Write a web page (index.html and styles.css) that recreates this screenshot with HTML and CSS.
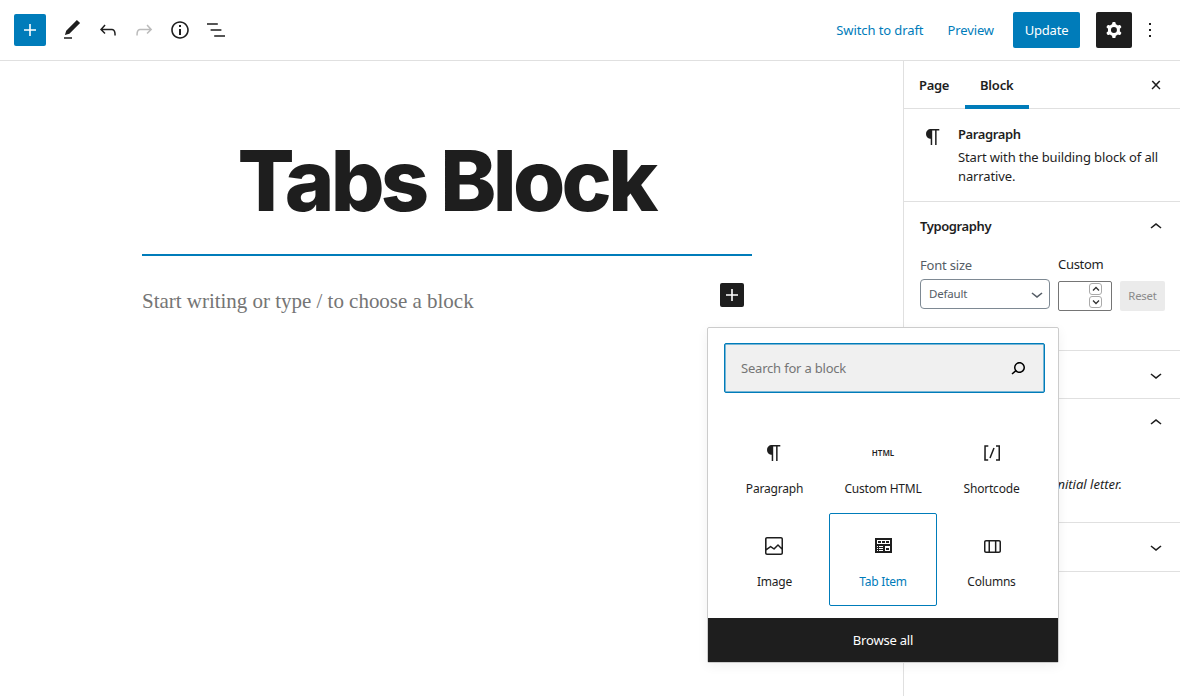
FILE: index.html
```html
<!DOCTYPE html>
<html lang="en">
<head>
<meta charset="utf-8">
<title>Edit Page</title>
<link rel="stylesheet" href="styles.css">
</head>
<body>
<div class="app">
  <header class="topbar">
    <button class="inserter"><svg class="icon" viewBox="0 0 24 24"><path d="M18 11.2h-5.2V6h-1.6v5.2H6v1.6h5.2V18h1.6v-5.2H18z"/></svg></button>
    <div class="tools">
      <button class="tool"><svg class="icon" viewBox="0 0 24 24"><path d="M20.1 5.1L16.9 2 6.2 12.7l-1.3 4.4 4.5-1.3L20.1 5.1zM4 20.8h8v-1.5H4v1.5z"/></svg></button>
      <button class="tool"><svg class="icon" viewBox="0 0 24 24"><path d="M18.3 11.7c-.6-.6-1.4-.9-2.3-.9H6.7l2.9-3.3-1.1-1-4.5 5L8.5 16l1-1-2.7-2.7H16c.5 0 .9.2 1.3.5 1 1 1 3.4 1 4.5v.3h1.5v-.2c0-1.5 0-4.3-1.5-5.7z"/></svg></button>
      <button class="tool tool-off"><svg class="icon" viewBox="0 0 24 24"><path d="M15.6 6.5l-1.1 1 2.9 3.3H8c-.9 0-1.7.3-2.3.9-1.4 1.5-1.4 4.2-1.4 5.6v.2h1.5v-.3c0-1.1 0-3.5 1-4.5.3-.3.7-.5 1.3-.5h9.2L14.5 15l1.1 1.1 4.6-4.6-4.6-5z"/></svg></button>
      <button class="tool"><svg class="icon" viewBox="0 0 24 24"><path d="M12 3.2c-4.8 0-8.8 3.9-8.8 8.8 0 4.8 3.9 8.8 8.8 8.8 4.8 0 8.8-3.9 8.8-8.8 0-4.8-4-8.8-8.8-8.8zm0 16c-4 0-7.2-3.3-7.2-7.2C4.8 8 8 4.8 12 4.8s7.2 3.3 7.2 7.2c0 4-3.2 7.2-7.2 7.2zM11 17h2v-6h-2v6zm0-8h2V7h-2v2z"/></svg></button>
      <button class="tool"><svg class="icon" viewBox="0 0 24 24"><path d="M13.8 5.2H3v1.5h10.8V5.2zm-3.6 12v1.5H21v-1.5H10.2zm7.2-6H6.6v1.5h10.8v-1.5z"/></svg></button>
    </div>
    <div class="actions">
      <a class="link draft">Switch to draft</a>
      <a class="link preview">Preview</a>
      <button class="update">Update</button>
      <button class="settings"><svg class="icon" viewBox="0 0 24 24"><path fill-rule="evenodd" d="M10.289 4.836A1 1 0 0111.275 4h1.306a1 1 0 01.987.836l.244 1.466c.787.26 1.503.679 2.108 1.218l1.393-.522a1 1 0 011.216.437l.653 1.13a1 1 0 01-.23 1.273l-1.148.944a6.025 6.025 0 010 2.435l1.149.946a1 1 0 01.23 1.272l-.653 1.13a1 1 0 01-1.216.437l-1.394-.522c-.605.54-1.32.958-2.108 1.218l-.244 1.466a1 1 0 01-.987.836h-1.306a1 1 0 01-.986-.836l-.244-1.466a5.995 5.995 0 01-2.108-1.218l-1.394.522a1 1 0 01-1.217-.436l-.653-1.131a1 1 0 01.23-1.272l1.149-.946a6.026 6.026 0 010-2.435l-1.148-.944a1 1 0 01-.23-1.272l.653-1.131a1 1 0 011.217-.437l1.393.522a5.994 5.994 0 012.108-1.218l.244-1.466zM14.929 12a3 3 0 11-6 0 3 3 0 016 0z"/></svg></button>
      <button class="tool"><svg class="icon" viewBox="0 0 24 24"><path d="M13 19h-2v-2h2v2zm0-6h-2v-2h2v2zm0-6h-2V5h2v2z"/></svg></button>
    </div>
  </header>

  <div class="body">
    <main class="canvas">
      <h1 class="title">Tabs Block</h1>
      <div class="insertion"></div>
      <div class="prompt">
        <p class="placeholder">Start writing or type / to choose a block</p>
        <button class="add"><svg class="icon" viewBox="0 0 24 24"><path d="M18 11.2h-5.2V6h-1.6v5.2H6v1.6h5.2V18h1.6v-5.2H18z"/></svg></button>
      </div>
    </main>

    <aside class="sidebar">
      <div class="tabs">
        <span class="tab">Page</span>
        <span class="tab tab-active">Block</span>
        <svg class="icon close" viewBox="0 0 24 24"><path d="M13 11.9l3.3-3.4-1.1-1-3.2 3.3-3.2-3.3-1.1 1 3.3 3.4-3.5 3.6 1 1L12 13l3.5 3.5 1-1z"/></svg>
      </div>
      <section class="card">
        <svg class="icon card-icon" viewBox="0 0 24 24"><path d="M18.3 4H9.9v-.1l-.9.2c-2.3.4-4 2.4-4 4.8s1.7 4.4 4 4.8l.7.1V20h1.5V5.5h2.9V20h1.5V5.5h2.7V4z"/></svg>
        <div>
          <h2 class="card-title">Paragraph</h2>
          <p class="card-text">Start with the building block of all<br>narrative.</p>
        </div>
      </section>
      <section class="panel typography">
        <div class="panel-head"><h2 class="panel-title">Typography</h2><svg class="icon" viewBox="0 0 24 24"><path d="M6.5 12.4L12 8l5.5 4.4-.9 1.2L12 10l-4.5 3.6-1-1.2z"/></svg></div>
        <div class="fields">
          <div class="field">
            <span class="label label-size">Font size</span>
            <div class="select"><span>Default</span><svg class="icon" viewBox="0 0 24 24"><path d="M17.5 11.6L12 16l-5.5-4.4.9-1.2L12 14l4.5-3.6 1 1.2z"/></svg></div>
          </div>
          <div class="field">
            <span class="label label-custom">Custom</span>
            <div class="custom">
              <div class="number">
                <span class="step"><svg class="caret" viewBox="0 0 8 6"><path d="M1 4.5l3-3 3 3"/></svg></span>
                <span class="step"><svg class="caret" viewBox="0 0 8 6"><path d="M1 1.5l3 3 3-3"/></svg></span>
              </div>
              <button class="reset">Reset</button>
            </div>
          </div>
        </div>
      </section>
      <section class="panel color"><svg class="icon" viewBox="0 0 24 24"><path d="M17.5 11.6L12 16l-5.5-4.4.9-1.2L12 14l4.5-3.6 1 1.2z"/></svg></section>
      <section class="panel text-settings"><svg class="icon" viewBox="0 0 24 24"><path d="M6.5 12.4L12 8l5.5 4.4-.9 1.2L12 10l-4.5 3.6-1-1.2z"/></svg><p class="hint">initial letter.</p></section>
      <section class="panel advanced"><svg class="icon" viewBox="0 0 24 24"><path d="M17.5 11.6L12 16l-5.5-4.4.9-1.2L12 14l4.5-3.6 1 1.2z"/></svg></section>
    </aside>
  </div>

  <div class="popover">
    <div class="search"><span class="search-text">Search for a block</span><svg class="icon" viewBox="0 0 24 24"><path d="M13.5 6C10.5 6 8 8.5 8 11.5c0 1.1.3 2.1.9 3l-3.4 3 1 1.1 3.4-2.9c1 .9 2.2 1.4 3.6 1.4 3 0 5.5-2.5 5.5-5.5C19 8.5 16.5 6 13.5 6zm0 9.5c-2.2 0-4-1.8-4-4s1.8-4 4-4 4 1.8 4 4-1.8 4-4 4z"/></svg></div>
    <div class="blocks">
      <div class="block"><svg class="icon" viewBox="0 0 24 24"><path d="M18.3 4H9.9v-.1l-.9.2c-2.3.4-4 2.4-4 4.8s1.7 4.4 4 4.8l.7.1V20h1.5V5.5h2.9V20h1.5V5.5h2.7V4z"/></svg><span>Paragraph</span></div>
      <div class="block"><b class="html-icon">HTML</b><span>Custom HTML</span></div>
      <div class="block"><svg class="icon" viewBox="0 0 24 24"><path d="M16 4.2v1.5h2.5v12.5H16v1.5h4V4.2h-4zM4.2 19.8h4v-1.5H5.8V5.8h2.5V4.2h-4l-.1 15.6zm5.1-3.1l1.4.6 4-10-1.4-.6-4 10z"/></svg><span>Shortcode</span></div>
      <div class="block"><svg class="icon" viewBox="0 0 24 24"><path d="M19 3H5c-1.1 0-2 .9-2 2v14c0 1.1.9 2 2 2h14c1.1 0 2-.9 2-2V5c0-1.1-.9-2-2-2zM5 4.5h14c.3 0 .5.2.5.5v8.4l-3-2.9c-.3-.3-.8-.3-1 0L11.9 14 9 12c-.3-.2-.6-.2-.8 0l-3.6 2.6V5c-.1-.3.1-.5.4-.5zm14 15H5c-.3 0-.5-.2-.5-.5v-2.4l4.1-3 3 1.9c.3.2.7.2.9-.1L16 12l3.5 3.4V19c0 .3-.2.5-.5.5z"/></svg><span>Image</span></div>
      <div class="block block-active"><svg class="icon" viewBox="0 0 24 24" shape-rendering="crispEdges"><path fill-rule="evenodd" d="M4 4h17v15H4zM6 6v4h13V6zM6 12v1h1v-1zM8 12v1h4v-1zM6 14v1h1v-1zM8 14v1h4v-1zM6 16v1h1v-1zM8 16v1h4v-1zM14 12v5h5v-5z"/><path d="M7 7h3v2H7zM11 7h3v2h-3zM15 7h3v2h-3zM15 14h3v2h-3z"/></svg><span>Tab Item</span></div>
      <div class="block"><svg class="icon" viewBox="0 0 24 24"><path d="M19 6H6c-1.100 0-2 .9-2 2v9c0 1.100.9 2 2 2h13c1.100 0 2-.9 2-2V8c0-1.100-.9-2-2-2zm-4.100 1.500v10H10v-10h4.900zM5.500 17V8c0-.3.2-.5.5-.5h2.500v10H6c-.3 0-.5-.2-.5-.5zm14 0c0 .3-.2.5-.5.5h-2.600v-10H19c.3 0 .5.2.5.5v9z"/></svg><span>Columns</span></div>
    </div>
    <button class="browse">Browse all</button>
  </div>
</div>
</body>
</html>
```
FILE: styles.css
```css
* { box-sizing: border-box; }
body {
  margin: 0;
  font: 13px/19px "Noto Sans", "Open Sans", sans-serif;
  letter-spacing: -0.2px;
  color: #1e1e1e;
  background: #fff;
}
button { border: 0; padding: 0; font: inherit; letter-spacing: inherit; color: inherit; background: none; display: flex; align-items: center; justify-content: center; }
h1, h2, p { margin: 0; }
.icon { width: 24px; height: 24px; fill: currentColor; flex: none; display: block; }
.app { position: relative; width: 1180px; height: 696px; overflow: hidden; display: flex; flex-direction: column; }

.topbar { height: 61px; border-bottom: 1px solid #e0e0e0; display: flex; align-items: center; padding: 0 12px 0 14px; flex: none; }
.inserter { width: 32px; height: 32px; background: #007cba; color: #fff; border-radius: 2px; }
.tools { display: flex; margin-left: 8px; }
.tool { width: 36px; height: 36px; }
.tool-off { color: #bbb; }
.actions { display: flex; align-items: center; margin-left: auto; }
.link { color: #007cba; letter-spacing: -0.1px; }
.draft { margin-right: 24px; }
.preview { margin-right: 19px; }
.update { width: 67px; height: 36px; margin-right: 16px; background: #007cba; color: #fff; border-radius: 2px; }
.settings { width: 36px; height: 36px; background: #1e1e1e; color: #fff; border-radius: 2px; }

.body { display: flex; flex: 1; }
.canvas { width: 903px; padding: 75px 151px 0 142px; }
.title { font: 800 84.5px/88px Inter, sans-serif; letter-spacing: -0.044em; text-align: center; white-space: nowrap; padding-right: 2px; }
.insertion { height: 2px; background: #007cba; margin-top: 30px; }
.prompt { display: flex; justify-content: space-between; align-items: flex-start; margin-top: 27px; padding-right: 8px; }
.placeholder { font: 21px/36px "Liberation Serif", serif; letter-spacing: -0.02px; color: #757575; }
.add { width: 24px; height: 24px; background: #1e1e1e; color: #fff; border-radius: 2px; }

.sidebar { width: 277px; border-left: 1px solid #e0e0e0; }
.tabs { height: 48px; border-bottom: 1px solid #e0e0e0; display: flex; padding-right: 12px; align-items: center; }
.tab { height: 48px; line-height: 48px; font-weight: 600; letter-spacing: -0.35px; padding: 0 15px; width: 61px; white-space: nowrap; }
.tab-active { width: 64px; letter-spacing: -0.2px; box-shadow: inset 0 -4px #007cba; }
.close { margin-left: auto; }
.card { display: flex; height: 93px; padding: 16px; border-bottom: 1px solid #e0e0e0; }
.card-icon { margin: 0 13px 0 1px; }
.card-title { font-size: 13px; line-height: 19px; font-weight: 600; letter-spacing: -0.4px; margin-bottom: 4px; }
.card-text { white-space: nowrap; letter-spacing: -0.13px; }
.panel { border-bottom: 1px solid #e0e0e0; padding: 0 12px 0 16px; }
.typography { height: 149px; }
.panel-head { display: flex; justify-content: space-between; align-items: center; height: 49px; }
.panel-title { font-size: 13px; font-weight: 600; letter-spacing: -0.4px; }
.fields { display: flex; gap: 8px; }
.field { display: flex; flex-direction: column; }
.label { height: 19px; }
.label-size { color: #555d66; margin: 5px 0 4px; }
.label-custom { margin: 4px 0 7px; letter-spacing: -0.3px; }
.select { width: 130px; height: 30px; border: 1px solid #7e8993; border-radius: 4px; display: flex; align-items: center; justify-content: space-between; padding-left: 8px; font-size: 11.5px; color: #555d66; }
.select span { margin-bottom: 1px; }
.custom { display: flex; gap: 8px; }
.number { width: 54px; height: 30px; border: 1px solid #757575; border-radius: 2px; display: flex; flex-direction: column; align-items: flex-end; gap: 1px; padding: 1px 9px 0 0; }
.step { width: 13px; height: 12px; border: 1px solid #aaa; border-radius: 3px; display: flex; align-items: center; justify-content: center; }
.caret { width: 8px; height: 6px; fill: none; stroke: #333; stroke-width: 1.3; }
.reset { width: 45px; height: 30px; background: #ebebeb; color: #8a8a8a; font-size: 11.3px; padding-bottom: 1px; border-radius: 2px; }
.color, .text-settings, .advanced { display: flex; flex-direction: column; align-items: flex-end; }
.color { height: 48px; padding-top: 12px; }
.text-settings { height: 124px; padding-top: 12px; }
.advanced { height: 49px; padding-top: 12px; }
.hint { font-style: italic; white-space: nowrap; letter-spacing: 0; margin: 40px 46px 0 0; }

.popover { position: absolute; left: 707px; top: 327px; width: 352px; height: 336px; border: 1px solid #ccc; border-radius: 2px; background: #fff; box-shadow: 0 3px 12px rgba(0, 0, 0, .06); display: flex; flex-direction: column; }
.search { height: 50px; margin: 15px 13px 0 16px; border: 1px solid #007cba; box-shadow: inset 0 0 0 .5px #007cba; border-radius: 2px; background: #f0f0f0; display: flex; align-items: center; justify-content: space-between; padding: 0 14px 0 16px; color: #757575; }
.search .icon { color: #000; }
.blocks { display: grid; grid-template-columns: 109px 108px 109px; grid-template-rows: 93px 93px; margin: 27px 12px 0; }
.block { display: flex; flex-direction: column; align-items: center; font-size: 12px; line-height: 18px; padding-top: 21px; gap: 15px; white-space: nowrap; }
.block:nth-child(3n+1) .icon { margin-right: 1px; }
.block-active { border: 1px solid #007cba; border-radius: 2px; padding-top: 20px; color: #007cba; }
.block-active .icon { color: #1e1e1e; }
.html-icon { height: 24px; font-size: 8px; line-height: 24px; font-weight: 600; letter-spacing: 0; }
.browse { height: 44px; margin-top: auto; background: #1e1e1e; color: #fff; flex: none; }
```
